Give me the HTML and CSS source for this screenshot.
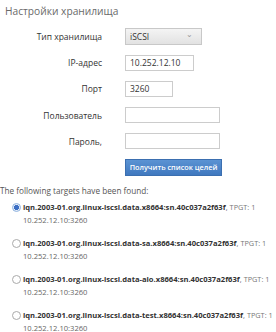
FILE: index.html
```html
<!DOCTYPE html>
<html lang="ru">
<head>
    <meta charset="UTF-8">
    <title>Настройки хранилища</title>
    <link rel="stylesheet" href="styles.css">
</head>
<body>

<h1>Настройки хранилища</h1>

<div class="form">
    <label>Тип хранилища</label>
    <div class="select"><span>iSCSI</span><span class="chev">&#8964;</span></div>

    <label>IP-адрес</label>
    <input class="ip" type="text" value="10.252.12.10">

    <label>Порт</label>
    <input class="port" type="text" value="3260">

    <label>Пользователь</label>
    <input class="wide" type="text">

    <label>Пароль,</label>
    <input class="wide" type="password">

    <span></span>
    <button>Получить список целей</button>
</div>

<p class="found">The following targets have been found:</p>

<ul class="targets">
    <li>
        <input type="radio" name="target" checked>
        <div><b>iqn.2003-01.org.linux-iscsi.data.x8664:sn.40c037a2f63f</b>, <span class="tpgt">TPGT: 1</span><br>10.252.12.10:3260</div>
    </li>
    <li>
        <input type="radio" name="target">
        <div><b>iqn.2003-01.org.linux-iscsi.data-sa.x8664:sn.40c037a2f63f</b>, <span class="tpgt">TPGT: 1</span><br>10.252.12.10:3260</div>
    </li>
    <li>
        <input type="radio" name="target">
        <div><b>iqn.2003-01.org.linux-iscsi.data-aio.x8664:sn.40c037a2f63f</b>, <span class="tpgt">TPGT: 1</span><br>10.252.12.10:3260</div>
    </li>
    <li>
        <input type="radio" name="target">
        <div><b>iqn.2003-01.org.linux-iscsi.data-test.x8664:sn.40c037a2f63f</b>, <span class="tpgt">TPGT: 1</span><br>10.252.12.10:3260</div>
    </li>
</ul>

</body>
</html>
```

FILE: styles.css
```css
body {
    font-family: "Open Sans", Arial, sans-serif;
    margin: 0;
    background-color: #fff;
    color: #444;
    overflow: hidden;
}
h1 {
    font-size: 10.2px;
    font-weight: normal;
    color: #6a6a6a;
    margin: 3px 0 0 5px;
    line-height: 16px;
}
.form {
    display: grid;
    grid-template-columns: 102px auto;
    grid-auto-rows: 17px;
    column-gap: 23px;
    row-gap: 9.2px;
    margin-top: 9px;
    align-items: center;
    justify-items: start;
}
.form label {
    justify-self: end;
    font-size: 8.5px;
    color: #333;
}
.select {
    width: 77px;
    height: 17px;
    box-sizing: border-box;
    border: 1px solid #c8c8c8;
    background: linear-gradient(#f4f4f4, #e2e2e2);
    display: flex;
    justify-content: space-between;
    align-items: center;
    padding: 0 8px 0 4px;
    font-size: 8.5px;
    color: #333;
}
.chev {
    color: #999;
    font-size: 8px;
    line-height: 8px;
    margin-top: -5px;
}
input[type=text], input[type=password] {
    height: 16px;
    box-sizing: border-box;
    border: 1px solid #ccc;
    margin: 0;
    padding: 0 4px;
    font-family: inherit;
    font-size: 8.5px;
    color: #333;
}
.ip { width: 69px; }
.port { width: 48px; }
.wide { width: 95px; }
button {
    height: 17px;
    width: 97px;
    padding: 0;
    border: 1px solid #3b6fb0;
    background: linear-gradient(#5b93d3, #3f78bf);
    color: white;
    font-family: inherit;
    font-size: 7.3px;
    font-weight: 600;
    white-space: nowrap;
    cursor: pointer;
}
.found {
    font-size: 8.2px;
    color: #555;
    margin: 9px 0 0 0;
    line-height: 12px;
}
.targets {
    list-style: none;
    margin: 4px 0 0 0;
    padding: 0 0 0 12px;
}
.targets li {
    display: flex;
    align-items: flex-start;
    margin-bottom: 10px;
}
.targets div {
    font-size: 7.6px;
    line-height: 13px;
    color: #666;
    white-space: nowrap;
}
.targets b {
    color: #333;
    font-weight: bold;
}
.tpgt {
    font-size: 7.3px;
    color: #777;
}
input[type=radio] {
    appearance: none;
    width: 9px;
    height: 9px;
    margin: 2px 2px 0 0;
    border: 1px solid #aaa;
    border-radius: 50%;
    background: #fff;
    flex: none;
    box-sizing: border-box;
}
input[type=radio]:checked {
    border-color: #8fb3e0;
    background: radial-gradient(circle, #3d6fc4 0 2.3px, #e4ecf8 2.8px);
}
```
